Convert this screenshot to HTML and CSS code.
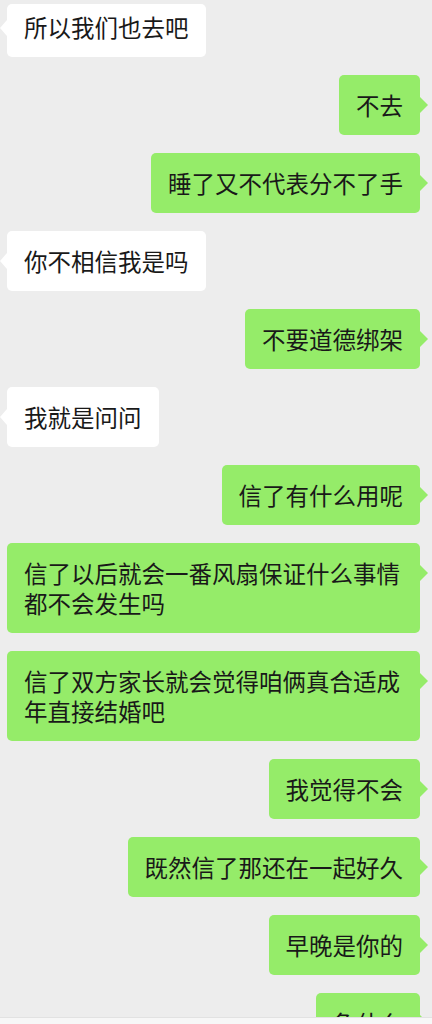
FILE: index.html
```html
<!DOCTYPE html>
<html lang="zh-CN">
<head>
  <meta charset="UTF-8">
  <meta name="viewport" content="width=device-width, initial-scale=1">
  <title>聊天</title>
  <link rel="stylesheet" href="styles.css">
</head>
<body>

  <main class="chat">
    <div class="msg left first"><div class="bubble">所以我们也去吧</div></div>
    <div class="msg right"><div class="bubble">不去</div></div>
    <div class="msg right"><div class="bubble">睡了又不代表分不了手</div></div>
    <div class="msg left"><div class="bubble">你不相信我是吗</div></div>
    <div class="msg right"><div class="bubble">不要道德绑架</div></div>
    <div class="msg left"><div class="bubble">我就是问问</div></div>
    <div class="msg right"><div class="bubble">信了有什么用呢</div></div>
    <div class="msg right"><div class="bubble">信了以后就会一番风扇保证什么事情都不会发生吗</div></div>
    <div class="msg right"><div class="bubble">信了双方家长就会觉得咱俩真合适成年直接结婚吧</div></div>
    <div class="msg right"><div class="bubble">我觉得不会</div></div>
    <div class="msg right"><div class="bubble">既然信了那还在一起好久</div></div>
    <div class="msg right"><div class="bubble">早晚是你的</div></div>
    <div class="msg right"><div class="bubble">急什么</div></div>
  </main>

  <footer class="inputbar"></footer>

</body>
</html>
```

FILE: styles.css
```css
html, body {
  margin: 0;
  height: 1024px;
}

body {
  font-family: "Noto Sans CJK SC", "Noto Sans", sans-serif;
  background: #ededed;
  color: #191919;
  display: flex;
  flex-direction: column;
  overflow: hidden;
}

.chat {
  flex: 1;
  overflow: hidden;
  display: flex;
  flex-direction: column;
  gap: 18px;
  padding: 4px 12px 0 7px;
}

.msg {
  display: flex;
}

.msg.right {
  justify-content: flex-end;
}

.bubble {
  position: relative;
  box-sizing: border-box;
  max-width: 413px;
  padding: 15px 17px;
  font-size: 23.5px;
  line-height: 30px;
  border-radius: 5px;
  background: #fff;
}

.first .bubble {
  padding-top: 8px;
}

.right .bubble {
  background: #95ec69;
}

.bubble::before {
  content: "";
  position: absolute;
  top: 22px;
  border-top: 8px solid transparent;
  border-bottom: 8px solid transparent;
}

.first .bubble::before {
  top: 16px;
}

.left .bubble::before {
  left: -7px;
  border-right: 7px solid #fff;
}

.right .bubble::before {
  right: -8px;
  border-left: 8px solid #95ec69;
}

.inputbar {
  height: 6px;
  background: #f7f7f7;
  border-top: 1px solid #e2e2e2;
}
```
